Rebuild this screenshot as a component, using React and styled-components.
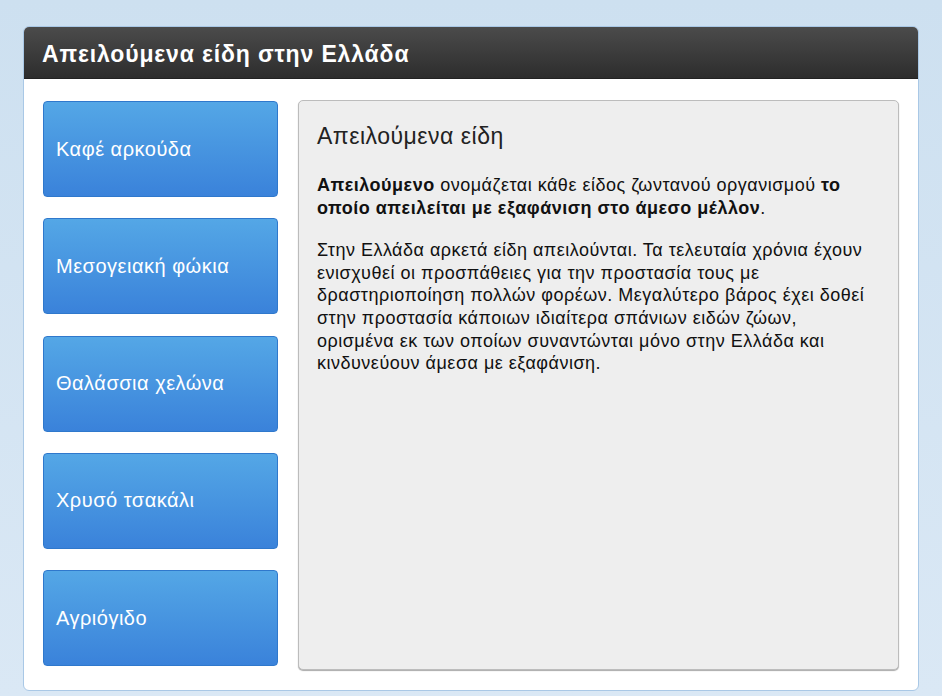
import React from 'react'
import styled, { createGlobalStyle } from 'styled-components'

const GlobalStyle = createGlobalStyle`
  html, body {
    margin: 0;
    padding: 0;
  }
  body {
    font-family: "Liberation Sans", Arial, sans-serif;
    background: linear-gradient(to bottom, #cde0f0 0%, #dae8f5 100%);
    min-height: 696px;
  }
`

const species = [
  'Καφέ αρκούδα',
  'Μεσογειακή φώκια',
  'Θαλάσσια χελώνα',
  'Χρυσό τσακάλι',
  'Αγριόγιδο',
]

const Page = styled.div`
  padding: 26px 23px 5px 23px;
  height: 696px;
  box-sizing: border-box;
`

const Card = styled.section`
  height: 665px;
  box-sizing: border-box;
  display: flex;
  flex-direction: column;
  background: #fff;
  border: 1px solid #a9c8e6;
  border-radius: 6px;
  overflow: hidden;
`

const Header = styled.header`
  height: 52px;
  box-sizing: border-box;
  flex-shrink: 0;
  display: flex;
  align-items: center;
  padding: 4px 18px 0 18px;
  background: linear-gradient(to bottom, #4b4b4b 0%, #2d2d2d 100%);
  border-bottom: 1px solid #222;
`

const Title = styled.h1`
  margin: 0;
  color: #fff;
  font-size: 23px;
  font-weight: bold;
  letter-spacing: 0.85px;
`

const Body = styled.div`
  flex: 1;
  display: flex;
  gap: 20px;
  padding: 22px 19px 20px 19px;
`

const Menu = styled.nav`
  width: 235px;
  display: flex;
  flex-direction: column;
  gap: 21.3px;
`

const SpeciesButton = styled.button`
  height: 96px;
  display: flex;
  align-items: center;
  padding: 0 12px;
  border: 1px solid #2f78cc;
  border-radius: 4px;
  background: linear-gradient(to bottom, #54a7e6 0%, #3a82da 100%);
  color: #fff;
  font-family: "Liberation Sans", Arial, sans-serif;
  font-size: 20px;
  letter-spacing: 0.5px;
  text-align: left;
  cursor: pointer;
`

const Panel = styled.article`
  flex: 1;
  margin-top: -1px;
  background: #eeeeee;
  border: 1px solid #bcbcbc;
  border-radius: 5px;
  box-shadow: 0 1px 1px #aaa;
  padding: 22px 24px 22px 18px;
  color: #111;
`

const PanelTitle = styled.h2`
  margin: 0 0 25px 0;
  font-size: 23px;
  line-height: 26px;
  font-weight: normal;
  letter-spacing: 0.5px;
  color: #222;
`

const Text = styled.p`
  margin: 0 0 20px 0;
  font-size: 18px;
  line-height: 22.6px;
  letter-spacing: 0.5px;
`

export default function App() {
  return (
    <>
      <GlobalStyle />
      <Page>
        <Card>
          <Header>
            <Title>Απειλούμενα είδη στην Ελλάδα</Title>
          </Header>
          <Body>
            <Menu>
              {species.map((name) => (
                <SpeciesButton key={name}>{name}</SpeciesButton>
              ))}
            </Menu>
            <Panel>
              <PanelTitle>Απειλούμενα είδη</PanelTitle>
              <Text>
                <b>Απειλούμενο</b> ονομάζεται κάθε είδος ζωντανού οργανισμού <b>το οποίο απειλείται με εξαφάνιση στο άμεσο μέλλον</b>.
              </Text>
              <Text>
                Στην Ελλάδα αρκετά είδη απειλούνται. Τα τελευταία χρόνια έχουν ενισχυθεί οι προσπάθειες για την προστασία τους με δραστηριοποίηση πολλών φορέων. Μεγαλύτερο βάρος έχει δοθεί στην προστασία κάποιων ιδιαίτερα σπάνιων ειδών ζώων, ορισμένα εκ των οποίων συναντώνται μόνο στην Ελλάδα και κινδυνεύουν άμεσα με εξαφάνιση.
              </Text>
            </Panel>
          </Body>
        </Card>
      </Page>
    </>
  )
}
